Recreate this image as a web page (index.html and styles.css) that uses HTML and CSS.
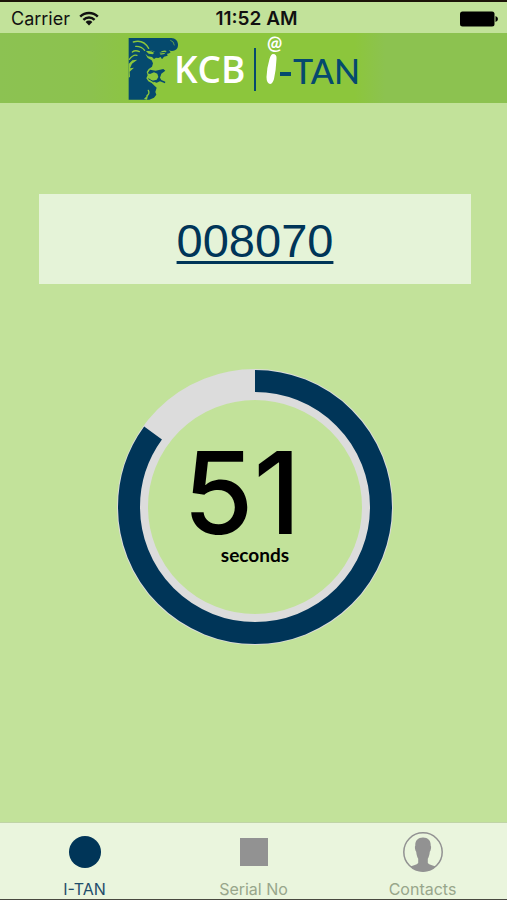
FILE: index.html
```html
<!DOCTYPE html>
<html lang="en">
<head>
    <meta charset="UTF-8">
    <meta name="viewport" content="width=device-width, initial-scale=1">
    <title>KCB i-TAN</title>
    <link rel="stylesheet" href="styles.css">
</head>
<body>
    <div class="status-bar">
        <div class="carrier">
            <span>Carrier</span>
            <svg class="wifi" viewBox="0 0 20 15" aria-hidden="true">
                <path d="M1.2 5.6a12.6 12.6 0 0 1 17.6 0M4.4 8.8a8 8 0 0 1 11.2 0" fill="none" stroke="#111" stroke-width="2.4"/>
                <path d="M10 14.5L6.6 11a4.8 4.8 0 0 1 6.8 0z" fill="#111"/>
            </svg>
        </div>
        <div class="time">11:52 AM</div>
        <svg class="battery" viewBox="0 0 38 16" aria-hidden="true">
            <rect x="0" y="0.5" width="34.5" height="15" rx="2.5"/>
            <path d="M35.5 5q2.5 1 2.5 3t-2.5 3z"/>
        </svg>
    </div>

    <header class="header">
        <svg class="logo" viewBox="0 0 240 70" role="img" aria-label="KCB i-TAN">
            <!-- lion -->
            <g transform="scale(0.3333) translate(-384 -99)">
                <path fill="#054a6e" d="M386 114H514Q532 115 534 132Q535 146 525 151Q514 155 506 150L512 157Q507 162 501 161L503 167L492 170L486 178L482 171L475 174L468 173L462 177L456 171L444 169L436 161L443 174L455 181L459 190L456 200L446 207L440 216L443 226L439 235L445 244L455 249L470 263L466 276L469 284L462 293L448 299H386Z"/>
                <path fill="#054a6e" d="M450 209L467 212L490 207L496 212L484 221L480 233L484 240L496 245L495 250L480 244L470 248L454 243L470 239L475 231L472 221L462 217L450 222L443 220Z"/>
                <!-- mane highlights -->
                <path fill="none" stroke="#8cc63c" stroke-width="4" stroke-linecap="round" d="M400 126Q430 117 446 145M407 139Q424 138 434 151M397 156Q406 149 418 155M388 178Q400 162 411 166M445 271Q450 281 441 287"/>
                <path fill="#8cc63c" d="M386 192L397 181L412 179L396 191L390 205L402 203L389 215L390 230L386 234ZM438 154Q452 148 464 155L459 163L446 161ZM478 158Q491 149 500 153L493 162L482 164ZM432 297L445 283L441 299Z"/>
                <path fill="none" stroke="#8cc63c" stroke-width="2" stroke-linecap="round" d="M512 121Q522 124 523 135"/>
                <path fill="none" stroke="#054a6e" stroke-width="3" d="M439 150Q455 151 466 159M470 160L497 157M445 236L462 246"/>
            </g>
            <text class="logo-kcb" x="46" y="50">KCB</text>
            <rect x="126" y="15" width="2" height="43" fill="#054a6e"/>
            <text class="logo-at" x="139" y="17">@</text>
            <path d="M145 21q4 0 3.500 5-.5 11-2.500 20-1.500 5-4 5-3.500-1-3.500-7 .5-10 3-18 1.500-5 3.500-5z" fill="#fff"/>
            <rect x="152" y="39" width="11" height="4" fill="#054a6e"/>
            <text class="logo-tan" x="165" y="51">TAN</text>
        </svg>
    </header>

    <main class="content">
        <div class="code-box">
            <a class="code" href="#">008070</a>
        </div>

        <div class="timer" role="timer">
            <svg class="ring" viewBox="0 0 276 276" aria-hidden="true">
                <circle cx="138" cy="138" r="122.5" fill="none" stroke="#dcdcdc" stroke-width="31"/>
                <!-- 51 of 60 seconds -->
                <circle cx="138" cy="138" r="126" fill="none" stroke="#003558" stroke-width="22" pathLength="60" stroke-dasharray="51 9" transform="rotate(-90 138 138)"/>
            </svg>
            <div class="timer-text">
                <span class="timer-value">51</span>
                <span class="timer-label">seconds</span>
            </div>
        </div>
    </main>

    <nav class="tab-bar">
        <a class="tab selected" href="#">
            <svg viewBox="0 0 40 40" aria-hidden="true"><circle cx="20" cy="20" r="16"/></svg>
            <span>I-TAN</span>
        </a>
        <a class="tab" href="#">
            <svg viewBox="0 0 40 40" aria-hidden="true"><rect x="6" y="6" width="28" height="28"/></svg>
            <span>Serial No</span>
        </a>
        <a class="tab" href="#">
            <svg viewBox="0 0 40 40" aria-hidden="true">
                <circle cx="20" cy="20" r="19.2" fill="none" stroke="#929292" stroke-width="1.5"/>
                <path d="M20 5.500c5 0 8 3.200 7.700 8 .9 1.200.2 5-.9 6.200-.3 3-1 5.500-2 7v4.300c1.500 2 5 2.200 7.800 3.600C29 38 24.500 39.500 20 39.500S11 38 7.400 34.600c2.800-1.400 6.300-1.600 7.800-3.600v-4.300c-1-1.500-1.700-4-2-7-1.100-1.200-1.800-5-.9-6.200C12 8.700 15 5.500 20 5.500z"/>
            </svg>
            <span>Contacts</span>
        </a>
    </nav>
</body>
</html>
```
FILE: styles.css
```css
* {
    box-sizing: border-box;
}
body {
    display: flex;
    flex-direction: column;
    margin: 0;
    min-height: 100vh;
    background: #c2e29a;
    font-family: Inter, "Liberation Sans", sans-serif;
}
a {
    text-decoration: none;
}
.status-bar {
    display: grid;
    grid-template-columns: 1fr auto 1fr;
    align-items: center;
    height: 33px;
    padding: 2px 9px 0 11px;
    border-top: 2px solid #1c1408;
    color: #111;
    font-size: 18px;
    line-height: 22px;
}
.carrier {
    display: flex;
    align-items: center;
    gap: 9px;
}
.wifi {
    width: 20px;
    height: 15px;
}
.time {
    padding-left: 4px;
    font-size: 19px;
    font-weight: 600;
}
.battery {
    justify-self: end;
    width: 38px;
    height: 16px;
}
.header {
    display: flex;
    justify-content: center;
    height: 70px;
    background: linear-gradient(90deg, #8cc252 0%, #8cc24e 18%, #8cc63c 30%, #8cc63c 70%, #8cc250 76%);
}
.logo {
    width: 240px;
    height: 70px;
    margin-right: 11px;
    overflow: visible;
}
.logo-kcb {
    fill: #fff;
    font: 600 37px "Open Sans", sans-serif;
}
.logo-at {
    fill: #fff;
    font: 700 18px Lato, sans-serif;
}
.logo-tan {
    fill: #054a6e;
    font: 500 34px Lato, sans-serif;
}
.content {
    flex: 1;
    display: flex;
    flex-direction: column;
    align-items: center;
    gap: 85px;
    padding: 91px 36px 40px 39px;
}
.code-box {
    display: flex;
    justify-content: center;
    align-items: center;
    width: 100%;
    height: 90px;
    padding-top: 3px;
    background: #e5f3d8;
}
.code {
    color: #003558;
    font: 47px/54px "Liberation Sans", Arial, sans-serif;
    text-decoration: underline;
    text-decoration-thickness: 3px;
    text-underline-offset: 4px;
}
.timer {
    display: grid;
    place-items: center;
}
.ring,
.timer-text {
    grid-area: 1 / 1;
}
.ring {
    width: 276px;
    height: 276px;
}
.timer-text {
    display: flex;
    flex-direction: column;
    align-items: center;
    padding-bottom: 4px;
    color: #000;
}
.timer-value {
    padding-right: 26px;
    font: 500 114px/100px Inter, sans-serif;
}
.timer-label {
    font: 700 19px/24px Lato, sans-serif;
}
.tab-bar {
    display: grid;
    grid-template-columns: repeat(3, 1fr);
    padding-top: 9px;
    border-top: 1px solid #c0d4a6;
    border-bottom: 1px solid #48483f;
    background: #eaf5dd;
}
.tab {
    display: flex;
    flex-direction: column;
    align-items: center;
    gap: 7px;
    color: #98a68b;
    fill: #929292;
    font-size: 16px;
    line-height: 20px;
}
.tab svg {
    width: 40px;
    height: 40px;
}
.tab.selected {
    color: #1f4d6b;
    fill: #003558;
}
```
